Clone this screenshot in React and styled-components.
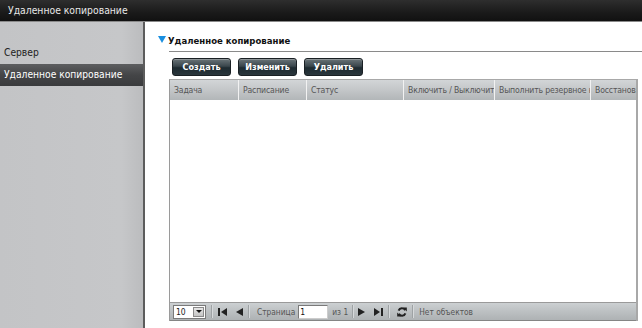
import React from "react";
import styled, { createGlobalStyle } from "styled-components";

const Global = createGlobalStyle`
  html, body { margin: 0; padding: 0; background: #fff; }
  body { width: 642px; height: 328px; overflow: hidden; font-family: "DejaVu Sans Condensed", "Liberation Sans", Arial, sans-serif; }
  #root { height: 328px; }
`;

const Page = styled.div`
  display: flex;
  flex-direction: column;
  height: 328px;
`;

const TopBar = styled.div`
  height: 21px;
  flex: none;
  background: linear-gradient(#2e2e2e, #1a1a1a 60%, #111);
  border-bottom: 1px solid #8a8a8a;
  color: #e8e8e8;
  font-size: 10.3px;
  line-height: 21px;
  padding-left: 8px;
`;

const Body = styled.div`
  flex: 1;
  display: flex;
  min-height: 0;
`;

const Sidebar = styled.div`
  width: 145px;
  flex: none;
  box-sizing: border-box;
  background: linear-gradient(90deg, #c3c4c6, #c6c7c9 85%, #bbbcbe);
  border-right: 2px solid #5c5c5c;
  padding-top: 20px;
`;

const NavItem = styled.div`
  height: 22px;
  line-height: 22px;
  padding-left: 4px;
  font-size: 10.2px;
  color: ${(p) => (p.$active ? "#ffffff" : "#222")};
  background: ${(p) => (p.$active ? "linear-gradient(#5d5e60, #444547 50%, #3a3b3d)" : "transparent")};
  white-space: nowrap;
`;

const Main = styled.div`
  flex: 1;
  padding: 11px 4px 0 24px;
  display: flex;
  flex-direction: column;
  min-width: 0;
`;

const Title = styled.div`
  height: 18px;
  font-size: 9.5px;
  font-weight: bold;
  color: #111;
  line-height: 16px;
  border-bottom: 1px solid #8a8a8a;
  margin-right: -4px;
  white-space: nowrap;
  &::before {
    content: "";
    display: inline-block;
    margin-left: -11px;
    margin-right: 2px;
    width: 0;
    height: 0;
    border-left: 4.5px solid transparent;
    border-right: 4.5px solid transparent;
    border-top: 7px solid #1a8fe0;
    vertical-align: 1px;
  }
`;

const Toolbar = styled.div`
  display: flex;
  gap: 7px;
  padding: 6px 0 3px 3px;
`;

const Button = styled.div`
  width: 59px;
  height: 18px;
  box-sizing: border-box;
  border-radius: 3px;
  background: linear-gradient(#6a7478, #3a464c 45%, #1d2a30 55%, #2a363c);
  border: 1px solid #1a2024;
  box-shadow: inset 0 1px 0 rgba(255, 255, 255, 0.25);
  color: #fff;
  font-size: 9px;
  font-weight: bold;
  text-align: center;
  line-height: 16px;
`;

const Grid = styled.div`
  height: 242px;
  box-sizing: border-box;
  border-left: 1px solid #9a9a9a;
  border-top: 1px solid #a8a8a8;
  border-right: 2px solid #a8a8a8;
  display: flex;
  flex-direction: column;
`;

const HeadRow = styled.div`
  display: flex;
  height: 20px;
  flex: none;
  background: linear-gradient(#d2d5d7, #c3c6c8 50%, #b2b6b8);
  overflow: hidden;
`;

const HeadCell = styled.div`
  width: ${(p) => p.$w}px;
  flex: none;
  box-sizing: border-box;
  border-right: 1px solid #f2f2f2;
  padding-left: 4px;
  font-size: 8.6px;
  letter-spacing: -0.15px;
  color: #555;
  line-height: 20px;
  white-space: nowrap;
  overflow: hidden;
`;

const GridBody = styled.div`
  flex: 1;
  background: #fff;
`;

const Pager = styled.div`
  height: 19px;
  flex: none;
  box-sizing: border-box;
  border-top: 1px solid #9a9a9a;
  border-bottom: 1px solid #858585;
  background: linear-gradient(#ccd0d2, #bcc0c2 50%, #aeb2b4);
  display: flex;
  align-items: center;
  padding-left: 3px;
  font-size: 8.3px;
  color: #555;
`;

const Select = styled.div`
  width: 33px;
  height: 14px;
  box-sizing: border-box;
  background: #fff;
  border: 1px solid #7a7a7a;
  display: flex;
  align-items: center;
  justify-content: space-between;
  padding-left: 2px;
  font-size: 8.5px;
  color: #222;
`;

const SelectArrow = styled.div`
  width: 11px;
  height: 10px;
  margin-right: 1px;
  background: linear-gradient(#e6e6e6, #c4c4c4);
  border: 1px solid #8a8a8a;
  box-sizing: border-box;
  display: flex;
  align-items: center;
  justify-content: center;
  &::after {
    content: "";
    border-left: 3px solid transparent;
    border-right: 3px solid transparent;
    border-top: 3px solid #111;
  }
`;

const Sep = styled.div`
  width: 1px;
  height: 13px;
  background: #9ea2a4;
  border-right: 1px solid #d6d9db;
  margin: 0 ${(p) => p.$r ?? 5}px 0 ${(p) => p.$l ?? 5}px;
`;

const Icon = styled.div`
  display: flex;
  align-items: center;
  margin-right: ${(p) => p.$r ?? 0}px;
`;

const Label = styled.span`
  white-space: nowrap;
`;

const PageInput = styled.div`
  width: 30px;
  height: 14px;
  box-sizing: border-box;
  background: #fff;
  border: 1px solid #7a7a7a;
  border-right-color: #ccc;
  border-bottom-color: #ccc;
  font-size: 8.5px;
  color: #111;
  padding-left: 1px;
  line-height: 12px;
  margin: 0 4px 0 3px;
`;

const First = () => (
  <svg width="9" height="8" viewBox="0 0 9 8"><rect x="0" y="0" width="2" height="8" fill="#222" /><polygon points="9,0 9,8 3,4" fill="#222" /></svg>
);
const Prev = () => (
  <svg width="7" height="8" viewBox="0 0 7 8"><polygon points="7,0 7,8 0,4" fill="#222" /></svg>
);
const Next = () => (
  <svg width="7" height="8" viewBox="0 0 7 8"><polygon points="0,0 0,8 7,4" fill="#222" /></svg>
);
const Last = () => (
  <svg width="9" height="8" viewBox="0 0 9 8"><polygon points="0,0 0,8 6,4" fill="#222" /><rect x="7" y="0" width="2" height="8" fill="#222" /></svg>
);
const Refresh = () => (
  <svg width="10" height="10" viewBox="0 0 10 10">
    <path d="M8.2 3.2A3.6 3.6 0 0 0 1.6 3.6" stroke="#222" strokeWidth="2" fill="none" />
    <path d="M1.8 6.8A3.6 3.6 0 0 0 8.4 6.4" stroke="#222" strokeWidth="2" fill="none" />
    <polygon points="6,0.5 9.8,0.5 9.8,4.5" fill="#222" />
    <polygon points="4,9.5 0.2,9.5 0.2,5.5" fill="#222" />
  </svg>
);

const columns = [
  ["Задача", 69],
  ["Расписание", 68],
  ["Статус", 97],
  ["Включить / Выключить", 91],
  ["Выполнить резервное копирование", 96],
  ["Восстановить", 60],
];

export default function App() {
  return (
    <Page>
      <Global />
      <TopBar>Удаленное копирование</TopBar>
      <Body>
        <Sidebar>
          <NavItem>Сервер</NavItem>
          <NavItem $active>Удаленное копирование</NavItem>
        </Sidebar>
        <Main>
          <Title>Удаленное копирование</Title>
          <Toolbar>
            <Button>Создать</Button>
            <Button>Изменить</Button>
            <Button>Удалить</Button>
          </Toolbar>
          <Grid>
            <HeadRow>
              {columns.map(([t, w]) => (
                <HeadCell key={t} $w={w}>{t}</HeadCell>
              ))}
            </HeadRow>
            <GridBody />
            <Pager>
              <Select>10<SelectArrow /></Select>
              <Sep />
              <Icon $r={9}><First /></Icon>
              <Icon><Prev /></Icon>
              <Sep $r={7} />
              <Label>Страница</Label>
              <PageInput>1</PageInput>
              <Label>из 1</Label>
              <Sep $l={4} $r={4} />
              <Icon $r={9}><Next /></Icon>
              <Icon><Last /></Icon>
              <Sep $r={7} />
              <Icon><Refresh /></Icon>
              <Sep />
              <Label>Нет объектов</Label>
            </Pager>
          </Grid>
        </Main>
      </Body>
    </Page>
  );
}
